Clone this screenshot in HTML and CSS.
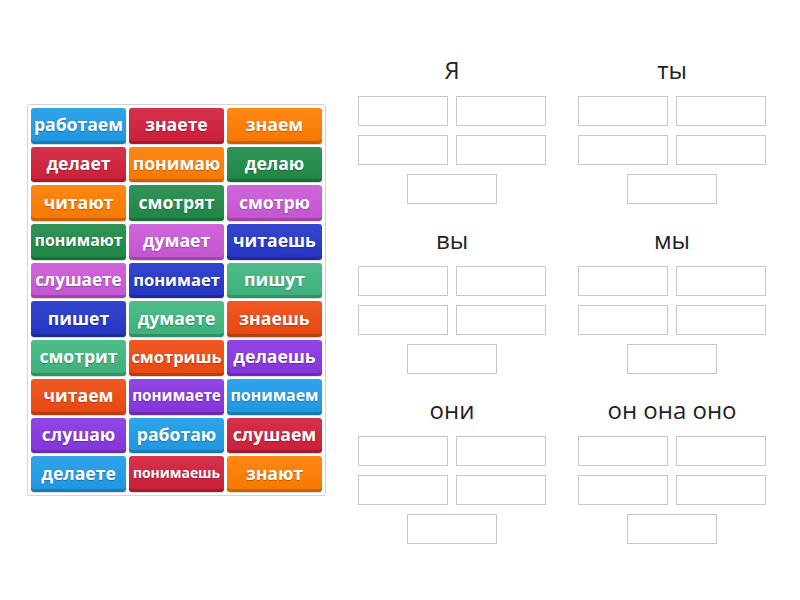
FILE: index.html
```html
<!DOCTYPE html>
<html lang="ru">
<head>
  <meta charset="UTF-8">
  <title>Группировка: глаголы</title>
  <link rel="stylesheet" href="styles.css">
</head>
<body>
  <div class="activity">
    <div class="tiles">
      <div class="tile blue">работаем</div>
      <div class="tile red">знаете</div>
      <div class="tile orange">знаем</div>

      <div class="tile red">делает</div>
      <div class="tile orange">понимаю</div>
      <div class="tile green">делаю</div>

      <div class="tile orange">читают</div>
      <div class="tile green">смотрят</div>
      <div class="tile pink">смотрю</div>

      <div class="tile green s16">понимают</div>
      <div class="tile pink">думает</div>
      <div class="tile navy">читаешь</div>

      <div class="tile pink s17">слушаете</div>
      <div class="tile navy s165">понимает</div>
      <div class="tile mint">пишут</div>

      <div class="tile navy">пишет</div>
      <div class="tile mint">думаете</div>
      <div class="tile flame">знаешь</div>

      <div class="tile mint">смотрит</div>
      <div class="tile flame s165">смотришь</div>
      <div class="tile purple">делаешь</div>

      <div class="tile flame">читаем</div>
      <div class="tile purple s15">понимаете</div>
      <div class="tile blue s16">понимаем</div>

      <div class="tile purple">слушаю</div>
      <div class="tile blue">работаю</div>
      <div class="tile red">слушаем</div>

      <div class="tile blue">делаете</div>
      <div class="tile red s14">понимаешь</div>
      <div class="tile orange">знают</div>
    </div>

    <div class="groups">
      <div class="group">
        <div class="group-title">Я</div>
        <div class="slots">
          <div class="slot"></div><div class="slot"></div>
          <div class="slot"></div><div class="slot"></div>
          <div class="slot"></div>
        </div>
      </div>
      <div class="group">
        <div class="group-title">ты</div>
        <div class="slots">
          <div class="slot"></div><div class="slot"></div>
          <div class="slot"></div><div class="slot"></div>
          <div class="slot"></div>
        </div>
      </div>
      <div class="group">
        <div class="group-title">вы</div>
        <div class="slots">
          <div class="slot"></div><div class="slot"></div>
          <div class="slot"></div><div class="slot"></div>
          <div class="slot"></div>
        </div>
      </div>
      <div class="group">
        <div class="group-title">мы</div>
        <div class="slots">
          <div class="slot"></div><div class="slot"></div>
          <div class="slot"></div><div class="slot"></div>
          <div class="slot"></div>
        </div>
      </div>
      <div class="group">
        <div class="group-title">они</div>
        <div class="slots">
          <div class="slot"></div><div class="slot"></div>
          <div class="slot"></div><div class="slot"></div>
          <div class="slot"></div>
        </div>
      </div>
      <div class="group">
        <div class="group-title">он она оно</div>
        <div class="slots">
          <div class="slot"></div><div class="slot"></div>
          <div class="slot"></div><div class="slot"></div>
          <div class="slot"></div>
        </div>
      </div>
    </div>
  </div>
</body>
</html>
```

FILE: styles.css
```css
body {
  margin: 0;
  background: #fff;
  font-family: 'Open Sans', 'Noto Sans', sans-serif;
  color: #222;
}
.activity {
  display: flex;
  align-items: flex-start;
  gap: 32px;
  padding: 54px 0 0 27px;
}

/* word bank */
.tiles {
  margin-top: 50px;
  padding: 3px;
  border: 1px solid #d4d4d4;
  border-radius: 3px;
  display: grid;
  grid-template-columns: repeat(3, 95px);
  grid-auto-rows: 35.7px;
  gap: 3px;
}
.tile {
  display: flex;
  align-items: center;
  justify-content: center;
  padding-bottom: 3px;
  box-sizing: border-box;
  border-radius: 3px;
  color: #fff;
  font-weight: 700;
  font-size: 17.6px;
  white-space: nowrap;
  text-shadow: 0 1px 1px rgba(0,0,0,0.25);
  box-shadow: inset 0 -3px 0 rgba(0,0,0,0.18), 0 1px 1px rgba(0,0,0,0.15);
  background-image: linear-gradient(rgba(255,255,255,0.08), rgba(0,0,0,0.04));
}
.s17  { font-size: 17.2px; }
.s165 { font-size: 16.5px; }
.s16  { font-size: 15.9px; }
.s15  { font-size: 15.2px; }
.s14  { font-size: 13.9px; }

.blue   { background-color: #1f9ce8; }
.red    { background-color: #d2203b; }
.orange { background-color: #ff7d00; }
.green  { background-color: #1f8b48; }
.pink   { background-color: #cb58d8; }
.navy   { background-color: #2436c9; }
.mint   { background-color: #3fb77f; }
.flame  { background-color: #ef4a10; }
.purple { background-color: #8836e2; }

/* drop groups */
.groups {
  display: grid;
  grid-template-columns: repeat(2, 188px);
  column-gap: 32px;
  row-gap: 20px;
}
.group-title {
  font-size: 24px;
  line-height: 32px;
  text-align: center;
  margin-bottom: 10px;
}
.slots {
  display: flex;
  flex-wrap: wrap;
  justify-content: center;
  gap: 9px 8px;
}
.slot {
  width: 90px;
  height: 30px;
  box-sizing: border-box;
  border: 1px solid #c8c8c8;
  background: #fff;
}
```
